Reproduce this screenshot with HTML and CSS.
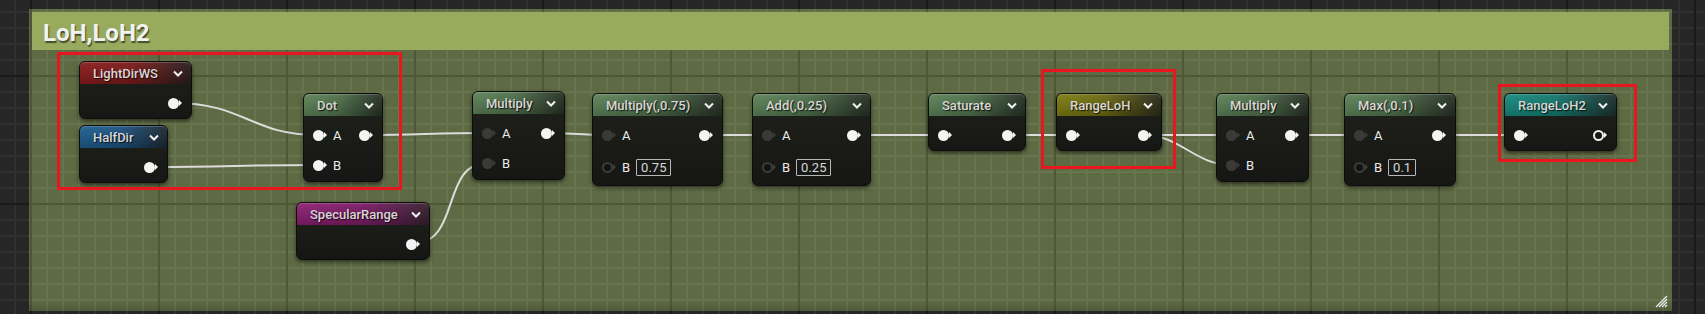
FILE: index.html
```html
<!DOCTYPE html>
<html lang="en">
<head>
    <meta charset="UTF-8">
    <title>Material Graph - LoH,LoH2</title>
    <link rel="stylesheet" href="styles.css">
</head>
<body>

<div class="graph">

    <!-- Comment box -->
    <div class="comment">
        <div class="comment-title">LoH,LoH2</div>
        <svg class="grip" width="13" height="13" viewBox="0 0 13 13">
            <path d="M12 1 L1 12 M12 4 L4 12 M12 7 L7 12 M12 10 L10 12" stroke="#e8e8e8" stroke-width="1.3"/>
        </svg>
    </div>

    <!-- Wires -->
    <svg class="wires" width="1705" height="314">
        <g fill="none" stroke="#dcdcdc" stroke-width="2">
            <path d="M173.5 103 C 245 103, 250 135, 318.5 135"/>
            <path d="M149.5 167 C 230 167, 240 165, 318.5 165"/>
            <path d="M364.5 135 C 420 135, 430 133, 487.5 133"/>
            <path d="M411.5 244 C 462 244, 440 163, 487.5 163"/>
            <path d="M546.5 133 C 575 133, 580 135, 607.5 135"/>
            <path d="M704.5 135 L 767.5 135"/>
            <path d="M852.5 135 L 943.5 135"/>
            <path d="M1007.5 135 L 1071.5 135"/>
            <path d="M1143.5 135 L 1231.5 135"/>
            <path d="M1143.5 135 C 1180 135, 1195 165, 1231.5 165"/>
            <path d="M1290.5 135 L 1359.5 135"/>
            <path d="M1437.5 135 L 1519.5 135"/>
        </g>
    </svg>

    <!-- Nodes -->
    <div class="node n-lightdir">
        <div class="node-head head-red"><span>LightDirWS</span><svg class="chev" width="10" height="7"><polyline points="1,1.5 5,5.5 9,1.5"/></svg></div>
        <div class="node-body">
            <div class="row"><span class="pin out"></span></div>
        </div>
    </div>

    <div class="node n-halfdir">
        <div class="node-head head-blue"><span>HalfDir</span><svg class="chev" width="10" height="7"><polyline points="1,1.5 5,5.5 9,1.5"/></svg></div>
        <div class="node-body">
            <div class="row"><span class="pin out"></span></div>
        </div>
    </div>

    <div class="node n-dot">
        <div class="node-head head-green"><span>Dot</span><svg class="chev" width="10" height="7"><polyline points="1,1.5 5,5.5 9,1.5"/></svg></div>
        <div class="node-body two">
            <div class="row"><span class="pin"></span><span class="label">A</span><span class="pin out"></span></div>
            <div class="row"><span class="pin"></span><span class="label">B</span></div>
        </div>
    </div>

    <div class="node n-specular">
        <div class="node-head head-magenta"><span>SpecularRange</span><svg class="chev" width="10" height="7"><polyline points="1,1.5 5,5.5 9,1.5"/></svg></div>
        <div class="node-body">
            <div class="row"><span class="pin out"></span></div>
        </div>
    </div>

    <div class="node n-mul1">
        <div class="node-head head-green"><span>Multiply</span><svg class="chev" width="10" height="7"><polyline points="1,1.5 5,5.5 9,1.5"/></svg></div>
        <div class="node-body two">
            <div class="row"><span class="pin dim"></span><span class="label">A</span><span class="pin out"></span></div>
            <div class="row"><span class="pin dim"></span><span class="label">B</span></div>
        </div>
    </div>

    <div class="node n-mul075">
        <div class="node-head head-green"><span>Multiply(,0.75)</span><svg class="chev" width="10" height="7"><polyline points="1,1.5 5,5.5 9,1.5"/></svg></div>
        <div class="node-body tall">
            <div class="row"><span class="pin dim"></span><span class="label">A</span><span class="pin out"></span></div>
            <div class="row"><span class="pin empty"></span><span class="label">B</span><span class="val">0.75</span></div>
        </div>
    </div>

    <div class="node n-add025">
        <div class="node-head head-green"><span>Add(,0.25)</span><svg class="chev" width="10" height="7"><polyline points="1,1.5 5,5.5 9,1.5"/></svg></div>
        <div class="node-body tall">
            <div class="row"><span class="pin dim"></span><span class="label">A</span><span class="pin out"></span></div>
            <div class="row"><span class="pin empty"></span><span class="label">B</span><span class="val">0.25</span></div>
        </div>
    </div>

    <div class="node n-saturate">
        <div class="node-head head-green"><span>Saturate</span><svg class="chev" width="10" height="7"><polyline points="1,1.5 5,5.5 9,1.5"/></svg></div>
        <div class="node-body">
            <div class="row"><span class="pin"></span><span class="pin out"></span></div>
        </div>
    </div>

    <div class="node n-rangeloh">
        <div class="node-head head-olive"><span>RangeLoH</span><svg class="chev" width="10" height="7"><polyline points="1,1.5 5,5.5 9,1.5"/></svg></div>
        <div class="node-body">
            <div class="row"><span class="pin"></span><span class="pin out"></span></div>
        </div>
    </div>

    <div class="node n-mul2">
        <div class="node-head head-green"><span>Multiply</span><svg class="chev" width="10" height="7"><polyline points="1,1.5 5,5.5 9,1.5"/></svg></div>
        <div class="node-body two">
            <div class="row"><span class="pin dim"></span><span class="label">A</span><span class="pin out"></span></div>
            <div class="row"><span class="pin dim"></span><span class="label">B</span></div>
        </div>
    </div>

    <div class="node n-max01">
        <div class="node-head head-green"><span>Max(,0.1)</span><svg class="chev" width="10" height="7"><polyline points="1,1.5 5,5.5 9,1.5"/></svg></div>
        <div class="node-body tall">
            <div class="row"><span class="pin dim"></span><span class="label">A</span><span class="pin out"></span></div>
            <div class="row"><span class="pin empty"></span><span class="label">B</span><span class="val">0.1</span></div>
        </div>
    </div>

    <div class="node n-rangeloh2">
        <div class="node-head head-teal"><span>RangeLoH2</span><svg class="chev" width="10" height="7"><polyline points="1,1.5 5,5.5 9,1.5"/></svg></div>
        <div class="node-body">
            <div class="row"><span class="pin"></span><span class="pin out ring"></span></div>
        </div>
    </div>

    <!-- Highlight frames -->
    <div class="mark mark-inputs"></div>
    <div class="mark mark-rangeloh"></div>
    <div class="mark mark-rangeloh2"></div>

</div>

</body>
</html>
```

FILE: styles.css
```css
/* Base */
body {
    margin: 0;
    overflow: hidden;
    font-family: Roboto, "Liberation Sans", sans-serif;
}

/* Graph canvas with the editor grid: minor lines every 16px, major every 128px */
.graph {
    position: relative;
    width: 1705px;
    height: 314px;
    overflow: hidden;
    background-color: #262626;
    background-image:
        linear-gradient(90deg, #1a1a1a 2px, transparent 2px),
        linear-gradient(180deg, #1a1a1a 2px, transparent 2px),
        linear-gradient(90deg, #303030 2px, transparent 2px),
        linear-gradient(180deg, #303030 2px, transparent 2px);
    background-size: 128px 128px, 128px 128px, 16px 16px, 16px 16px;
    background-position: 30px 75px;
}

/* Comment box */
.comment {
    position: absolute;
    left: 29px;
    top: 9px;
    width: 1643px;
    height: 302px;
    box-sizing: border-box;
    padding: 3px;
    background-color: #5e6a44;
    background-image:
        linear-gradient(90deg, #4e5839 2px, transparent 2px),
        linear-gradient(180deg, #4e5839 2px, transparent 2px),
        linear-gradient(90deg, #68744e 2px, transparent 2px),
        linear-gradient(180deg, #68744e 2px, transparent 2px);
    background-size: 128px 128px, 128px 128px, 16px 16px, 16px 16px;
    background-position: 1px 66px;
    box-shadow: inset 0 -8px 8px -4px rgba(0, 0, 0, 0.18);
}

.comment-title {
    height: 38px;
    box-sizing: border-box;
    padding: 3px 0 0 11px;
    display: flex;
    align-items: center;
    background: #97aa5e;
    color: #f2f2f2;
    font-size: 24px;
    font-weight: bold;
    text-shadow: 1px 2px 1px rgba(0, 0, 0, 0.55);
}

.grip {
    position: absolute;
    right: 4px;
    bottom: 3px;
}

/* Wires sit between the comment and the nodes */
.wires {
    position: absolute;
    left: 0;
    top: 0;
}

/* Nodes */
.node {
    position: absolute;
    box-sizing: border-box;
    border: 1px solid #0c0c0b;
    border-radius: 6px;
    background: linear-gradient(180deg, #1f211c, #161714);
    box-shadow: 0 2px 4px rgba(0, 0, 0, 0.55);
}

.node-head {
    height: 22px;
    display: flex;
    align-items: center;
    justify-content: space-between;
    padding: 0 8px 0 13px;
    border-radius: 5px 5px 0 0;
    color: #d6d6d6;
    font-size: 13px;
    font-weight: 500;
    text-shadow: 1px 1px 1px rgba(0, 0, 0, 0.8);
    box-shadow: inset 0 1px 0 rgba(255, 255, 255, 0.18);
}

.chev polyline {
    fill: none;
    stroke: #f0f0f0;
    stroke-width: 2;
}

.head-red     { background: linear-gradient(180deg, rgba(255,255,255,0.06), rgba(0,0,0,0.2)), linear-gradient(90deg, #8c1b1b 0%, #7c1a1a 45%, #2a1d1d 100%); }
.head-blue    { background: linear-gradient(180deg, rgba(255,255,255,0.06), rgba(0,0,0,0.2)), linear-gradient(90deg, #1f5f91 0%, #1c5382 45%, #1d2733 100%); }
.head-green   { background: linear-gradient(180deg, rgba(255,255,255,0.06), rgba(0,0,0,0.2)), linear-gradient(90deg, #5e8458 0%, #4f714b 45%, #263025 100%); }
.head-magenta { background: linear-gradient(180deg, rgba(255,255,255,0.06), rgba(0,0,0,0.2)), linear-gradient(90deg, #8e1f74 0%, #7c1b66 50%, #35202f 100%); }
.head-olive   { background: linear-gradient(180deg, rgba(255,255,255,0.06), rgba(0,0,0,0.2)), linear-gradient(90deg, #7f7e10 0%, #6c6b12 45%, #2b2b1b 100%); }
.head-teal    { background: linear-gradient(180deg, rgba(255,255,255,0.06), rgba(0,0,0,0.2)), linear-gradient(90deg, #168c80 0%, #147a70 45%, #1c302e 100%); }

.node-body {
    display: flex;
    flex-direction: column;
    gap: 8px;
    padding: 8px 9px 4px;
}

.node-body.two { padding-bottom: 5px; }

.node-body.tall {
    gap: 10px;
    padding-bottom: 7px;
}

.row {
    height: 22px;
    display: flex;
    align-items: center;
    color: #ececec;
    font-size: 13px;
}

.label {
    margin-left: 6px;
}

.val {
    margin-left: 6px;
    height: 17px;
    padding: 0 4px;
    border: 1px solid #b8b8b8;
    border-radius: 1px;
    box-sizing: border-box;
    display: flex;
    align-items: center;
    color: #d8d8d8;
    font-size: 13px;
}

/* Pins: round socket plus a small arrow */
.pin {
    display: flex;
    align-items: center;
    width: 14px;
    height: 11px;
}

.pin::before {
    content: '';
    width: 11px;
    height: 11px;
    box-sizing: border-box;
    border-radius: 50%;
    background: #f4f4f4;
}

.pin::after {
    content: '';
    border-left: 3px solid #f4f4f4;
    border-top: 3px solid transparent;
    border-bottom: 3px solid transparent;
}

.pin.out { margin-left: auto; }

.pin.dim::before { background: #3a3b38; }
.pin.dim::after { border-left-color: #3a3b38; }

.pin.empty::before {
    background: #121311;
    border: 2px solid #3c3d3a;
}
.pin.empty::after { border-left-color: #3c3d3a; }

.pin.ring::before {
    background: transparent;
    border: 2px solid #f0f0f0;
}

/* Node placement on the graph */
.n-lightdir  { left: 79px;   top: 61px;  width: 113px; }
.n-halfdir   { left: 79px;   top: 125px; width: 89px; }
.n-dot       { left: 303px;  top: 93px;  width: 80px; }
.n-specular  { left: 296px;  top: 202px; width: 134px; }
.n-mul1      { left: 472px;  top: 91px;  width: 93px; }
.n-mul075    { left: 592px;  top: 93px;  width: 131px; }
.n-add025    { left: 752px;  top: 93px;  width: 119px; }
.n-saturate  { left: 928px;  top: 93px;  width: 98px; }
.n-rangeloh  { left: 1056px; top: 93px;  width: 106px; }
.n-mul2      { left: 1216px; top: 93px;  width: 93px; }
.n-max01     { left: 1344px; top: 93px;  width: 112px; }
.n-rangeloh2 { left: 1504px; top: 93px;  width: 113px; }

/* Red highlight frames */
.mark {
    position: absolute;
    box-sizing: border-box;
    border: 3px solid #e8161e;
}

.mark-inputs    { left: 57px;   top: 52px; width: 345px; height: 138px; }
.mark-rangeloh  { left: 1041px; top: 69px; width: 135px; height: 100px; }
.mark-rangeloh2 { left: 1498px; top: 84px; width: 139px; height: 78px; }
```
